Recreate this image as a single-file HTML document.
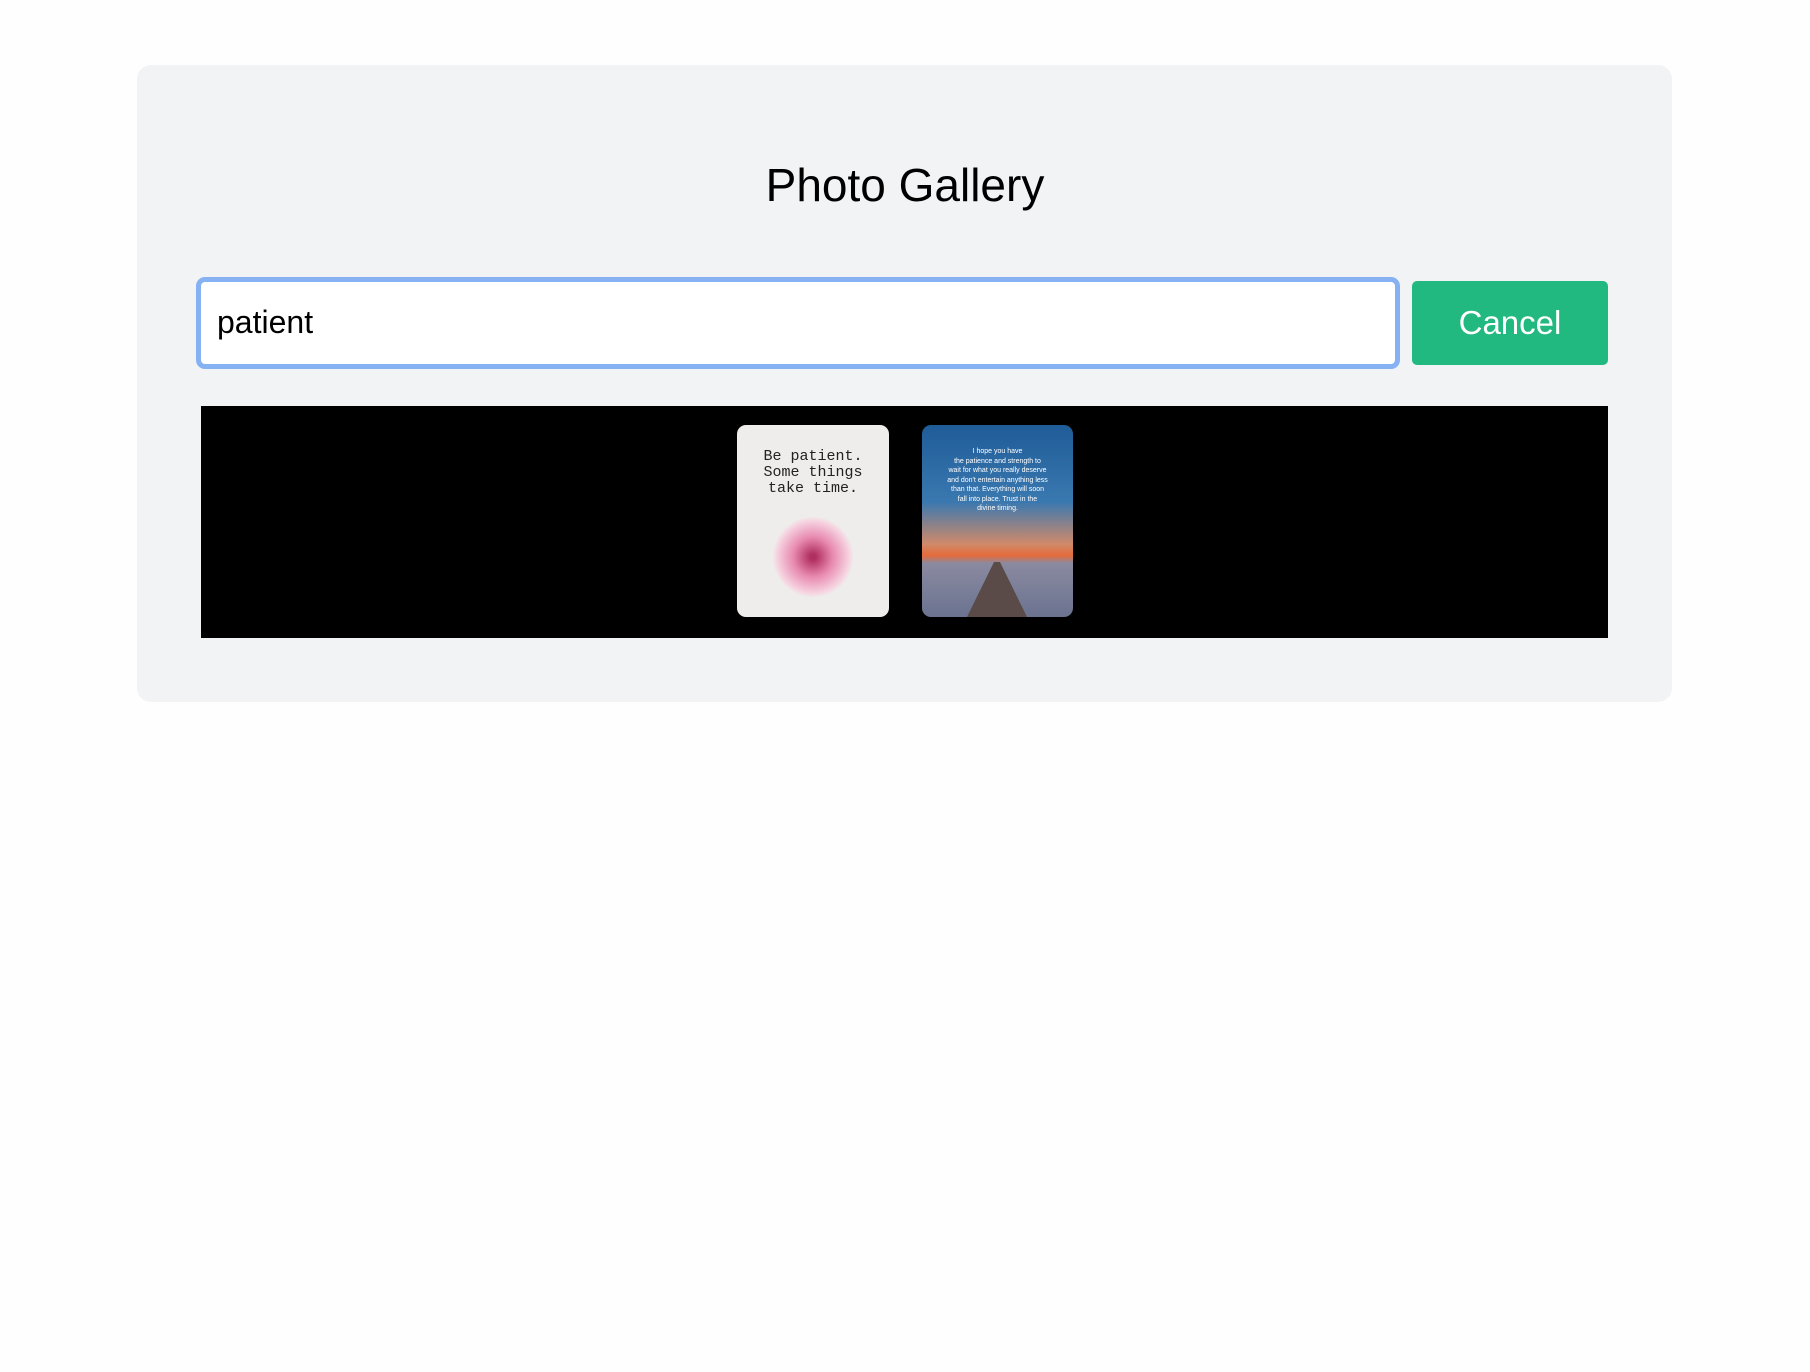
<!DOCTYPE html>
<html><head><style>
body{margin:0;background:#fefefe;width:1810px;height:1372px;font-family:"Liberation Sans",sans-serif;position:relative}
.card{position:absolute;left:137px;top:65px;width:1535px;height:637px;background:#f2f3f5;border-radius:14px}
h1{position:absolute;left:0;width:1810px;top:158px;margin:0;text-align:center;font-weight:400;font-size:46px;color:#000}
.inp{position:absolute;left:196px;top:277px;width:1204px;height:92px;box-sizing:border-box;border:5px solid #86b1f3;border-radius:9px;background:#fff;font-size:32px;line-height:80px;padding-left:16px;color:#000}
.btn{position:absolute;left:1412px;top:281px;width:196px;height:84px;background:#22b980;border-radius:5px;color:#fff;font-size:33px;text-align:center;line-height:84px}
.gal{position:absolute;left:201px;top:406px;width:1407px;height:232px;background:#000}
.p1{position:absolute;left:737px;top:425px;width:152px;height:192px;border-radius:9px;background:#eeedeb;text-align:center;font-family:"Liberation Mono",monospace;font-size:15px;line-height:16px;color:#222;overflow:hidden}
.p2{position:absolute;left:922px;top:425px;width:151px;height:192px;border-radius:9px;background:linear-gradient(#1f5c98 0%,#3a78b0 40%,#d08a6a 62%,#e46a3a 68%,#8a8aa0 72%,#6b7390 100%);text-align:center;font-size:7px;line-height:9.5px;color:#fff;overflow:hidden}
</style></head><body>
<div class="card"></div>
<h1>Photo Gallery</h1>
<div class="inp">patient</div>
<div class="btn">Cancel</div>
<div class="gal"></div>
<div class="p1"><div style="margin-top:24px">Be patient.<br>Some things<br>take time.</div>
<div style="margin:20px auto 0;width:80px;height:80px;border-radius:50%;background:radial-gradient(#b03060 5%,#e88ab0 35%,#f6d6e2 65%,transparent 72%)"></div></div>
<div class="p2"><div style="margin-top:22px">I hope you have<br>the patience and strength to<br>wait for what you really deserve<br>and don't entertain anything less<br>than that. Everything will soon<br>fall into place. Trust in the<br>divine timing.</div>
<div style="position:absolute;left:45px;bottom:0;width:60px;height:55px;background:#5a4a48;clip-path:polygon(45% 0,55% 0,100% 100%,0 100%)"></div></div>
</body></html>
